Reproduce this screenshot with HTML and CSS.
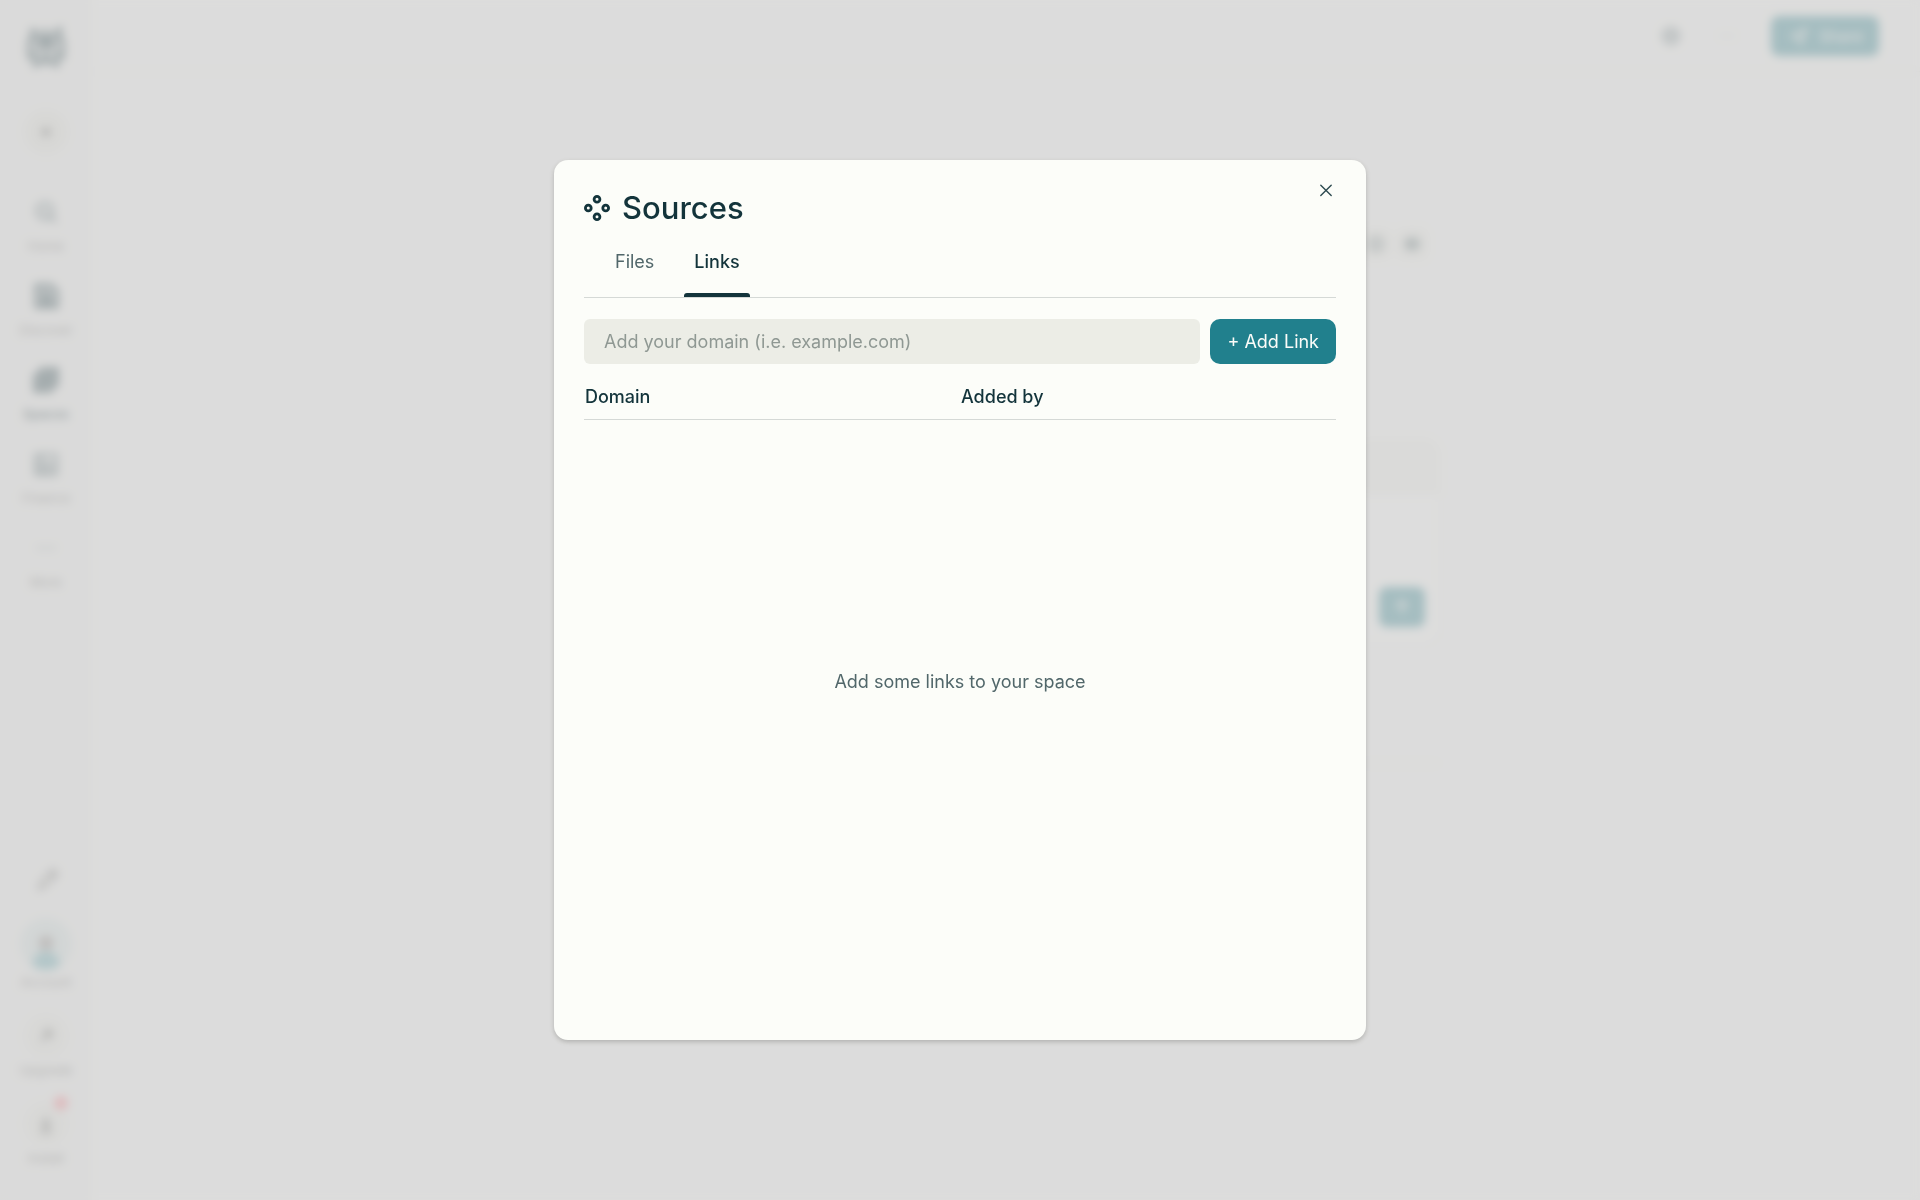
FILE: index.html
```html
<!DOCTYPE html>
<html lang="en">
<head>
    <meta charset="UTF-8">
    <meta name="viewport" content="width=device-width, initial-scale=1.0">
    <title>Sources</title>
    <link rel="stylesheet" href="styles.css">
</head>
<body>
    <!-- Page behind the dialog -->
    <div class="app" aria-hidden="true" inert>
        <nav class="sidebar">
            <svg class="logo" viewBox="0 0 40 42" fill="none" stroke="currentColor" stroke-width="4">
                <path d="M6 3l14 12L34 3v12M6 3v12M20 2v38M3 15h34v16h-6v9L20 30 9 40v-9H3z"/>
                <path d="M20 15L9 26v6M20 15l11 11v6"/>
            </svg>
            <button class="new-btn" aria-label="New">
                <svg class="icon" viewBox="0 0 24 24"><path d="M12 5v14M5 12h14"/></svg>
            </button>
            <div class="nav-main">
                <a href="#" class="nav-item">
                    <svg class="icon" viewBox="0 0 24 24"><circle cx="11" cy="11" r="7"/><path d="M16 16l5 5M8 11h6"/></svg>
                    <span>Home</span>
                </a>
                <a href="#" class="nav-item">
                    <svg class="icon bold" viewBox="0 0 24 24"><path d="M4 3h12l5 5v13H4zM8 9h7M8 13h9M8 17h9"/></svg>
                    <span>Discover</span>
                </a>
                <a href="#" class="nav-item active">
                    <svg class="icon bold" viewBox="0 0 24 24"><path d="M8 3h13v13H8zM3 8h13v13H3zM3 21L21 3"/></svg>
                    <span>Spaces</span>
                </a>
                <a href="#" class="nav-item">
                    <svg class="icon" viewBox="0 0 24 24"><path d="M3 4h18v17H3zM8 4v17M3 14h18M14 9v12"/></svg>
                    <span>Finance</span>
                </a>
                <a href="#" class="nav-item">
                    <svg class="icon" viewBox="0 0 24 24"><path d="M5 12h2M11 12h2M17 12h2"/></svg>
                    <span>More</span>
                </a>
            </div>
            <div class="nav-bottom">
                <svg class="icon" viewBox="0 0 24 24"><path d="M6 20l2-7L18 3l4 4-10 10zM15 6l4 4"/></svg>
                <a href="#" class="nav-item">
                    <span class="avatar"></span>
                    <span>Account</span>
                </a>
                <a href="#" class="nav-item">
                    <span class="round"><svg class="icon" viewBox="0 0 24 24"><path d="M7 17L17 7M9 7h8v8"/></svg></span>
                    <span>Upgrade</span>
                </a>
                <a href="#" class="nav-item">
                    <span class="round"><svg class="icon" viewBox="0 0 24 24"><path d="M12 4v12M7 11l5 5 5-5M6 20h12"/></svg><i class="dot"></i></span>
                    <span>Install</span>
                </a>
            </div>
        </nav>
        <div class="page">
            <header class="topbar">
                <svg class="icon" viewBox="0 0 24 24"><circle cx="12" cy="12" r="8"/><path d="M12 7v10M7 12h10"/></svg>
                <svg class="icon thin" viewBox="0 0 24 24"><path d="M5 12h2M11 12h2M17 12h2"/></svg>
                <button class="share-btn">
                    <svg class="icon" viewBox="0 0 24 24"><path d="M5 12l14-7-5 15-3-6z"/></svg>
                    Share
                </button>
            </header>
            <main class="space">
                <div class="space-tools">
                    <span class="chip"><svg class="icon" viewBox="0 0 24 24"><circle cx="12" cy="12" r="5"/></svg></span>
                    <span class="chip"><svg class="icon" viewBox="0 0 24 24"><path d="M5 12h3M11 12h3M17 12h3M9 8h6v8H9z"/></svg></span>
                </div>
                <div class="ask-box">
                    <div class="ask-head"></div>
                    <div class="ask-body">
                        <button class="ask-btn" aria-label="Ask"><svg class="icon" viewBox="0 0 24 24"><path d="M12 19V6M6 12l6-6 6 6"/></svg></button>
                    </div>
                </div>
                <div class="threads"></div>
            </main>
        </div>
    </div>

    <!-- Sources dialog -->
    <div class="overlay">
        <section class="modal" role="dialog" aria-modal="true" aria-labelledby="modal-title">
            <header class="modal-header">
                <h1 id="modal-title">
                    <svg class="sources-icon" viewBox="0 0 26 26" fill="none" stroke="currentColor" stroke-width="2.8">
                        <circle cx="13" cy="4.3" r="2.9"/>
                        <circle cx="4.3" cy="13" r="2.9"/>
                        <circle cx="21.7" cy="13" r="2.9"/>
                        <circle cx="13" cy="21.7" r="2.9"/>
                    </svg>
                    Sources
                </h1>
                <button class="close-btn" aria-label="Close">
                    <svg viewBox="0 0 20 20" fill="none" stroke="currentColor" stroke-width="1.4" stroke-linecap="round"><path d="M4.8 5.2l10.4 10.4M15.2 5.2L4.8 15.6"/></svg>
                </button>
            </header>

            <div class="tabs" role="tablist">
                <button class="tab" role="tab" aria-selected="false">Files</button>
                <button class="tab active" role="tab" aria-selected="true">Links</button>
            </div>

            <form class="link-form">
                <input type="text" class="domain-input" aria-label="Domain" placeholder="Add your domain (i.e. example.com)">
                <button type="button" class="add-btn">+ Add Link</button>
            </form>

            <table class="links-table">
                <thead>
                    <tr>
                        <th scope="col">Domain</th>
                        <th scope="col">Added by</th>
                    </tr>
                </thead>
            </table>

            <p class="empty">Add some links to your space</p>
        </section>
    </div>
</body>
</html>
```
FILE: styles.css
```css
* {
    box-sizing: border-box;
}
body {
    margin: 0;
    height: 100vh;
    overflow: hidden;
    font-family: Inter, "Liberation Sans", sans-serif;
    font-size: 18px;
    line-height: 24px;
    color: #13343b;
    background-color: #fcfcf9;
}
button, input {
    font: inherit;
    color: inherit;
    border: none;
    padding: 0;
}
button {
    cursor: pointer;
    background: none;
}
.icon {
    width: 28px;
    height: 28px;
    fill: none;
    stroke: currentColor;
    stroke-width: 2;
}
.icon.bold {
    stroke-width: 4;
}
.icon.thin {
    stroke-width: 1;
}

/* Page behind */
.app {
    display: flex;
    height: 100vh;
}
.sidebar {
    display: flex;
    flex-direction: column;
    align-items: center;
    width: 92px;
    padding: 26px 0 34px;
    background-color: #f3f3f1;
    color: #64645f;
    font-size: 13px;
    line-height: 16px;
}
.logo {
    width: 44px;
    height: 42px;
    color: #13343b;
}
.new-btn {
    display: grid;
    place-items: center;
    width: 44px;
    height: 44px;
    margin: 42px 0 44px;
    border-radius: 50%;
    background-color: #e8e8e0;
}
.new-btn .icon {
    width: 20px;
    height: 20px;
    stroke-width: 4;
}
.nav-main, .nav-bottom {
    display: flex;
    flex-direction: column;
    align-items: center;
    gap: 28px;
}
.nav-bottom {
    gap: 24px;
    margin-top: auto;
}
.nav-item {
    display: flex;
    flex-direction: column;
    align-items: center;
    gap: 12px;
    color: inherit;
    text-decoration: none;
}
.nav-item.active {
    color: #13343b;
    font-weight: 600;
}
.nav-main .icon {
    color: #13343b;
}
.nav-bottom .nav-item {
    gap: 4px;
}
.avatar {
    width: 52px;
    height: 52px;
    border-radius: 50%;
    background: radial-gradient(circle at 50% 90%, #59a5ae 0 12px, transparent 15px), radial-gradient(circle at 50% 48%, #8c8480 0 6px, transparent 9px), #d4e2e1;
}
.round {
    position: relative;
    display: grid;
    place-items: center;
    width: 44px;
    height: 44px;
    border-radius: 50%;
    background-color: #ebebe4;
}
.round .icon {
    width: 24px;
    height: 24px;
    stroke-width: 3;
}
.dot {
    position: absolute;
    top: -6px;
    right: 0;
    width: 14px;
    height: 14px;
    border-radius: 50%;
    background-color: #ff7780;
}
.page {
    flex: 1;
}
.topbar {
    display: flex;
    align-items: center;
    justify-content: flex-end;
    gap: 32px;
    height: 72px;
    padding: 0 41px 0;
    border-bottom: 1px solid #ecece6;
}
.share-btn {
    display: flex;
    align-items: center;
    justify-content: center;
    gap: 8px;
    width: 108px;
    height: 40px;
    border-radius: 8px;
    background-color: #21808d;
    color: #fcfcf9;
    font-size: 16px;
}
.share-btn .icon, .ask-btn .icon, .topbar .icon {
    width: 24px;
    height: 24px;
}
.space {
    max-width: 868px;
    margin: 0 auto;
}
.space-tools {
    display: flex;
    justify-content: flex-end;
    gap: 4px;
    padding: 156px 12px 0;
}
.chip {
    display: grid;
    place-items: center;
    width: 32px;
    height: 32px;
    border-radius: 8px;
    background-color: #f0f0e9;
}
.ask-box {
    margin-top: 178px;
    border-radius: 16px;
    background-color: #f3f3ee;
    border: 1px solid #ededE6;
}
.ask-head {
    height: 56px;
}
.ask-body {
    display: flex;
    align-items: flex-end;
    justify-content: flex-end;
    height: 148px;
    padding: 16px 14px;
    border-radius: 0 0 16px 16px;
    background-color: #fffffd;
}
.ask-btn {
    display: grid;
    place-items: center;
    width: 46px;
    height: 40px;
    border-radius: 8px;
    background-color: #21808d;
    color: #fcfcf9;
}
.threads {
    height: 120px;
    border-bottom: 1px solid #e4e4de;
}

/* Dialog */
.overlay {
    position: fixed;
    inset: 0;
    display: flex;
    align-items: center;
    justify-content: center;
    background-color: rgba(209, 209, 210, 0.75);
    backdrop-filter: blur(5px);
}
.modal {
    display: flex;
    flex-direction: column;
    width: 100%;
    max-width: 812px;
    min-height: calc(100vh - 320px);
    padding: 20px 30px 30px;
    border-radius: 14px;
    background-color: #fcfdf9;
    box-shadow: 0 2px 5px rgba(0, 0, 0, 0.2);
}
.modal-header {
    display: flex;
    align-items: flex-start;
    justify-content: space-between;
}
.modal-header h1 {
    display: flex;
    align-items: center;
    gap: 12px;
    margin: 0;
    padding-top: 8px;
    font-size: 31px;
    line-height: 40px;
    font-weight: 500;
}
.sources-icon {
    width: 26px;
    height: 26px;
}
.close-btn {
    width: 20px;
    height: 20px;
    color: #2d4a50;
}
.close-btn svg {
    display: block;
}
.tabs {
    display: flex;
    gap: 20px;
    padding-left: 21px;
    border-bottom: 1px solid #d5d9d6;
}
.tab {
    padding: 22px 10px 19px;
    border-bottom: 4px solid transparent;
    color: #51676a;
}
.tab.active {
    position: relative;
    color: #13343b;
    font-weight: 500;
}
.tab.active::after {
    content: "";
    position: absolute;
    left: 0;
    right: 0;
    bottom: -4px;
    height: 4px;
    border-radius: 3px 3px 0 0;
    background-color: #13343b;
}
.link-form {
    display: flex;
    gap: 10px;
    margin-top: 21px;
}
.domain-input {
    flex: 1;
    min-width: 0;
    height: 45px;
    padding: 0 20px;
    border-radius: 6px;
    background-color: #ecede6;
}
.domain-input::placeholder {
    color: #8f9893;
    opacity: 1;
}
.add-btn {
    padding: 0 17px;
    border-radius: 10px;
    background-color: #21808d;
    color: #fcfcf9;
}
.links-table {
    width: 100%;
    table-layout: fixed;
    border-collapse: collapse;
}
.links-table th {
    padding: 21px 1px 10px;
    border-bottom: 1px solid #d5d9d6;
    font-weight: 500;
    text-align: left;
}
.empty {
    display: flex;
    flex: 1;
    align-items: center;
    justify-content: center;
    margin: 0;
    padding-bottom: 67px;
    color: #51676a;
}
```
